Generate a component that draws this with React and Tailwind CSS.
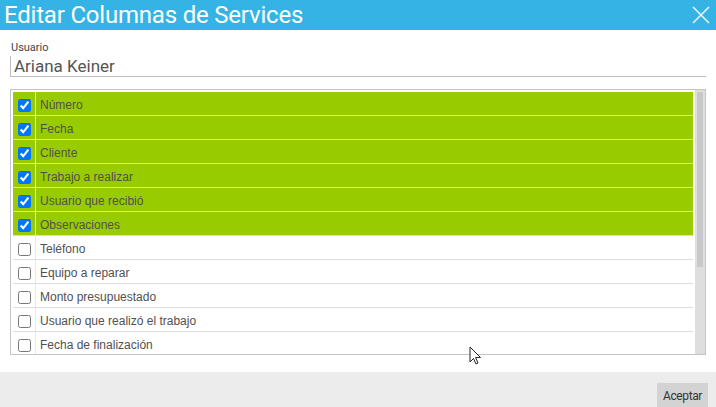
import React from 'react';

const COLUMNS = [
  { label: 'Número', checked: true },
  { label: 'Fecha', checked: true },
  { label: 'Cliente', checked: true },
  { label: 'Trabajo a realizar', checked: true },
  { label: 'Usuario que recibió', checked: true },
  { label: 'Observaciones', checked: true },
  { label: 'Teléfono', checked: false },
  { label: 'Equipo a reparar', checked: false },
  { label: 'Monto presupuestado', checked: false },
  { label: 'Usuario que realizó el trabajo', checked: false },
  { label: 'Fecha de finalización', checked: false },
];

function ColumnRow({ label, checked }) {
  return (
    <div
      className={`flex h-[24px] border-b border-[#dcdcdc] ${
        checked ? 'bg-[#99cc00]' : 'bg-white'
      }`}
    >
      <div
        className={`w-[23px] flex items-center justify-center pt-[3px] border-r ${
          checked ? 'border-[#e6f0c8]' : 'border-[#e8e8e8]'
        }`}
      >
        <input
          type="checkbox"
          defaultChecked={checked}
          className="w-[13px] h-[13px] ml-[1px]"
        />
      </div>
      <div className="flex items-center pl-[4px] pt-[2px] text-[12px] text-[#505050] font-['Liberation_Sans',Arial,sans-serif]">
        {label}
      </div>
    </div>
  );
}

export default function App() {
  return (
    <div className="relative w-[716px] h-[407px] overflow-hidden bg-white font-['Roboto',sans-serif]">
      <div className="flex items-center justify-between h-[30px] bg-[#35b3e5] pl-[4px] pr-[6px]">
        <h1 className="text-[24px] leading-none text-white font-normal tracking-[-0.2px]">
          Editar Columnas de Services
        </h1>
        <svg width="18" height="18" viewBox="0 0 18 18" className="mb-[1px]">
          <path d="M1 1 L17 17 M17 1 L1 17" stroke="#e4f5fc" strokeWidth="1.6" />
        </svg>
      </div>

      <div className="px-[10px] pt-[11px]">
        <label className="block pl-[1px] text-[11px] leading-[13px] text-[#444]">Usuario</label>
        <div className="mt-[2px] h-[21px] border-l border-b border-[#bdbdbd] pl-[3px] text-[17px] leading-[20px] text-[#555]">
          Ariana Keiner
        </div>

        <div className="mt-[12px] flex h-[266px] border border-[#c4c4c4]">
          <div className="flex-1 overflow-hidden pl-[2px] pt-[2px] pr-[2px]">
            {COLUMNS.map((c) => (
              <ColumnRow key={c.label} label={c.label} checked={c.checked} />
            ))}
          </div>
          <div className="w-[10px] bg-[#dedede] pt-[2px] flex justify-center">
            <div className="w-[6px] h-[175px] bg-[#c8c8c8]" />
          </div>
        </div>
      </div>

      <div className="mt-[17px] h-[35px] bg-[#ececec] flex justify-end items-start pt-[11px] pr-[8px]">
        <button className="h-[26px] px-[6px] bg-[#d3d3d3] text-[12px] text-[#333] tracking-[-0.4px]">
          Aceptar
        </button>
      </div>

      <svg
        width="14"
        height="20"
        viewBox="0 0 14 20"
        className="absolute left-[469px] top-[346px]"
      >
        <path
          d="M1 1 L1 16 L4.5 12.5 L7 18 L9 17 L6.6 11.6 L11.5 11.5 Z"
          fill="white"
          stroke="#222"
          strokeWidth="1"
          strokeLinejoin="miter"
        />
      </svg>
    </div>
  );
}
